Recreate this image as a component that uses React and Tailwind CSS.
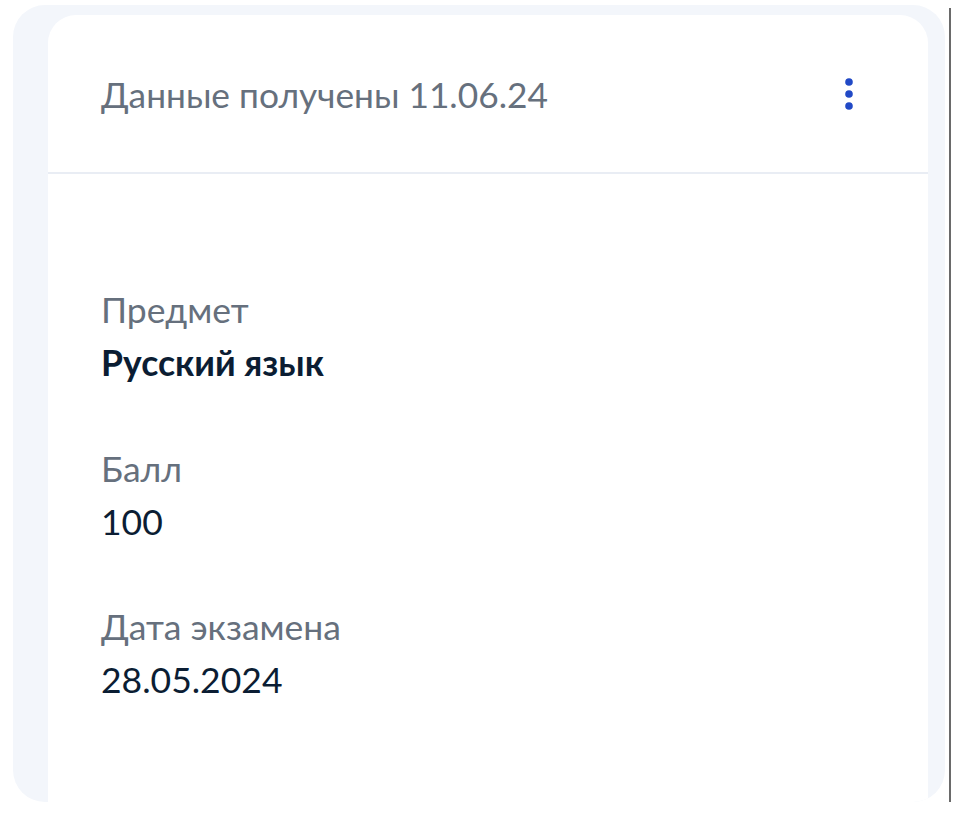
function Field({ label, value, bold }) {
  return (
    <div className="flex flex-col">
      <span className="text-[35.5px] leading-[53px] text-[#66707d]">{label}</span>
      <span
        className={
          "text-[35.5px] leading-[53px] text-[#0b1d33] " + (bold ? "font-bold" : "")
        }
      >
        {value}
      </span>
    </div>
  );
}

export default function App() {
  return (
    <div
      className="relative h-[815px] w-[953px] overflow-hidden bg-white"
      style={{ fontFamily: "Lato, 'Noto Sans', sans-serif" }}
    >
      <div className="absolute left-[949px] top-[8px] h-[794px] w-[2px] bg-[#6a6a6a]" />

      <div className="ml-[13px] mt-[5px] h-[797px] w-[932px] overflow-hidden rounded-[32px] bg-[#f3f6fb] pl-[35px] pr-[17px] pt-[10px]">
        <div className="h-full rounded-t-[28px] bg-white">

          <div className="flex h-[159px] items-center justify-between border-b-2 border-[#e9edf4] pl-[53px] pr-[75px]">
            <span className="pt-[2px] text-[35.3px] leading-[53px] text-[#66707d]">
              Данные получены 11.06.24
            </span>
            <svg width="8" height="34" viewBox="0 0 8 34">
              <circle cx="4" cy="5" r="3.8" fill="#2149c6" />
              <circle cx="4" cy="17" r="3.8" fill="#2149c6" />
              <circle cx="4" cy="29" r="3.8" fill="#2149c6" />
            </svg>
          </div>

          <div className="flex flex-col gap-[52.5px] pl-[53px] pt-[109px]">
            <Field label="Предмет" value="Русский язык" bold />
            <Field label="Балл" value="100" />
            <Field label="Дата экзамена" value="28.05.2024" />
          </div>

        </div>
      </div>
    </div>
  );
}
